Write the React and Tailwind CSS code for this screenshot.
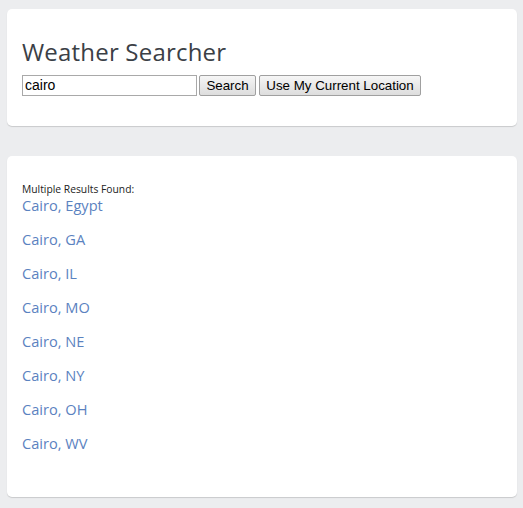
export default function App() {
  const cities = ["Cairo, Egypt", "Cairo, GA", "Cairo, IL", "Cairo, MO", "Cairo, NE", "Cairo, NY", "Cairo, OH", "Cairo, WV"];
  return (
    <div className="min-h-[508px] w-[523px] bg-[#ecedef] pt-[9px] pl-[7px] pr-[6px]">
      <div className="h-[117px] rounded-[5px] bg-white px-[15px] pt-[27px] shadow-[0_1px_1px_rgba(0,0,0,0.15)]">
        <h1 className="text-[24px] leading-[32px] text-[#3b4046] tracking-[0.2px] [font-family:'Open_Sans',sans-serif]">Weather Searcher</h1>
        <div className="mt-[7px] flex items-center gap-[2px] [font-family:'Liberation_Sans',Arial,sans-serif] text-[13.33px]">
          <input
            defaultValue="cairo"
            className="h-[21px] w-[175px] border border-[#a9a9a9] px-[2px] text-[14px] text-black outline-none"
          />
          <button className="h-[21px] w-[57px] rounded-[2px] border border-[#a0a0a0] bg-gradient-to-b from-[#f6f6f6] to-[#dddddd] text-[13.33px] text-black">Search</button>
          <button className="ml-[1px] h-[21px] w-[162px] rounded-[2px] border border-[#a0a0a0] bg-gradient-to-b from-[#f6f6f6] to-[#dddddd] text-[13.33px] text-black">Use My Current Location</button>
        </div>
      </div>
      <div className="mt-[30px] h-[341px] rounded-[5px] bg-white px-[15px] pt-[27px] shadow-[0_1px_1px_rgba(0,0,0,0.15)] [font-family:'Open_Sans',sans-serif]">
        <div className="text-[10.3px] leading-[12px] text-[#222]">Multiple Results Found:</div>
        <div className="mt-[2px] flex flex-col">
          {cities.map((c) => (
            <a key={c} className="flex h-[34px] items-start text-[14.6px] leading-[17px] text-[#5b82bf]">{c}</a>
          ))}
        </div>
      </div>
    </div>
  );
}
